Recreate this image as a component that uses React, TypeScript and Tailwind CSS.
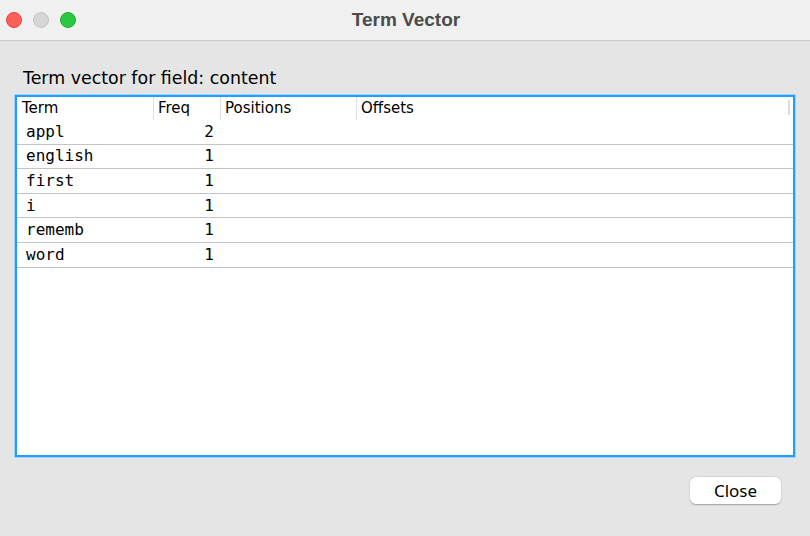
const rows = [
  { term: "appl", freq: 2 },
  { term: "english", freq: 1 },
  { term: "first", freq: 1 },
  { term: "i", freq: 1 },
  { term: "rememb", freq: 1 },
  { term: "word", freq: 1 },
];

export default function App() {
  return (
    <div className="w-[810px] h-[536px] bg-[#e5e5e5] flex flex-col overflow-hidden font-['DejaVu_Sans',sans-serif] text-black">
      {/* Title bar */}
      <div className="relative h-[41px] shrink-0 bg-[#f0f0f0] border-b border-[#c9c9c9] flex items-center justify-center">
        <div className="absolute left-[6px] top-[12px] flex gap-[11px]">
          <span className="w-[16px] h-[16px] rounded-full bg-[#fe5f57] border border-[#e2463f]" />
          <span className="w-[16px] h-[16px] rounded-full bg-[#d6d6d6] border border-[#c6c6c6]" />
          <span className="w-[16px] h-[16px] rounded-full bg-[#29c840] border border-[#1eae30]" />
        </div>
        <span className="pl-[2px] font-['Liberation_Sans',sans-serif] font-bold text-[19px] text-[#4b4b4b]">Term Vector</span>
      </div>

      {/* Body */}
      <div className="flex-1 flex flex-col px-[15px] pt-[27px]">
        <div className="pl-[8px] text-[17.4px] leading-[21px]">Term vector for field: content</div>

        <div className="mt-[6px] h-[362px] bg-white border-2 border-[#1ea0fb] outline outline-1 outline-[#9fd3fb] relative">
          <div className="absolute right-[3px] top-[3px] w-[2px] h-[15px] bg-[#dcdcdc]" />
          <div className="flex h-[23px] items-center text-[15px]">
            <div className="w-[136px] pl-[5px]">Term</div>
            <div className="w-[67px] pl-[4px] border-l border-[#dedede]">Freq</div>
            <div className="w-[136px] pl-[4px] border-l border-[#dedede]">Positions</div>
            <div className="flex-1 pl-[4px] border-l border-[#dedede]">Offsets</div>
          </div>
          {rows.map((r) => (
            <div key={r.term} className="flex h-[24.6px] items-center border-b border-[#c4c4c4] text-[16px] font-['DejaVu_Sans_Mono',monospace]">
              <div className="w-[136px] pl-[9px]">{r.term}</div>
              <div className="w-[61px] text-right">{r.freq}</div>
            </div>
          ))}
        </div>

        <div className="flex justify-end mt-[20px] pr-[14px]">
          <button className="w-[91px] h-[27px] bg-white rounded-[6px] shadow-[0_0.5px_1.5px_rgba(0,0,0,0.3)] text-[17px] font-['Noto_Sans',sans-serif] leading-none">Close</button>
        </div>
      </div>
    </div>
  );
}
